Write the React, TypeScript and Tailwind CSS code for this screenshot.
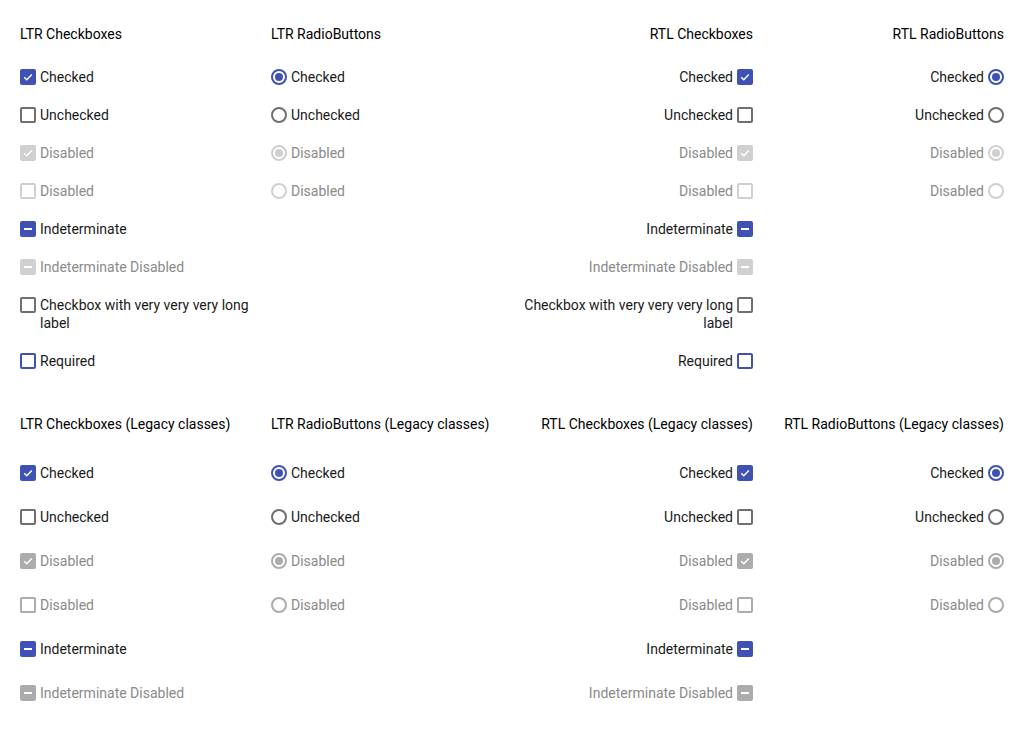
import React from "react";

type Kind = "checkbox" | "radio";
type State = "checked" | "unchecked" | "indeterminate";

interface Item {
  label: string;
  state: State;
  disabled?: boolean;
  required?: boolean;
}

const checkboxItems: Item[] = [
  { label: "Checked", state: "checked" },
  { label: "Unchecked", state: "unchecked" },
  { label: "Disabled", state: "checked", disabled: true },
  { label: "Disabled", state: "unchecked", disabled: true },
  { label: "Indeterminate", state: "indeterminate" },
  { label: "Indeterminate Disabled", state: "indeterminate", disabled: true },
  { label: "Checkbox with very very very long label", state: "unchecked" },
  { label: "Required", state: "unchecked", required: true },
];

const legacyCheckboxItems: Item[] = checkboxItems.slice(0, 6);

const radioItems: Item[] = [
  { label: "Checked", state: "checked" },
  { label: "Unchecked", state: "unchecked" },
  { label: "Disabled", state: "checked", disabled: true },
  { label: "Disabled", state: "unchecked", disabled: true },
];

function CheckBox({ item, legacy }: { item: Item; legacy: boolean }) {
  const dis = legacy ? "#acacac" : "#d0d0d0";
  if (item.state === "unchecked") {
    const border = item.disabled ? dis : item.required ? "#3f51b5" : "#6f6f6f";
    return (
      <span
        className="block w-4 h-4 shrink-0 rounded-[2px] border-2 bg-white"
        style={{ borderColor: border }}
      />
    );
  }
  const bg = item.disabled ? dis : "#3f51b5";
  return (
    <span
      className="flex items-center justify-center w-4 h-4 shrink-0 rounded-[2px]"
      style={{ backgroundColor: bg }}
    >
      {item.state === "checked" ? (
        <svg width="16" height="16" viewBox="0 0 16 16" fill="none">
          <path d="M4.2 8.2 L6.8 10.8 L11.8 5.6" stroke="white" strokeWidth="1.5" />
        </svg>
      ) : (
        <span className="block w-2 h-[2px] bg-white" />
      )}
    </span>
  );
}

function RadioDot({ item, legacy }: { item: Item; legacy: boolean }) {
  const dis = legacy ? "#acacac" : "#d0d0d0";
  const color = item.disabled ? dis : item.state === "checked" ? "#3f51b5" : "#6f6f6f";
  return (
    <span
      className="flex items-center justify-center w-4 h-4 shrink-0 rounded-full border-2 bg-white"
      style={{ borderColor: color }}
    >
      {item.state === "checked" && (
        <span className="block w-2 h-2 rounded-full" style={{ backgroundColor: color }} />
      )}
    </span>
  );
}

function Column({
  title,
  kind,
  items,
  rtl,
  legacy,
}: {
  title: string;
  kind: Kind;
  items: Item[];
  rtl: boolean;
  legacy: boolean;
}) {
  return (
    <div className={rtl ? "flex flex-col items-end" : "flex flex-col items-start"}>
      <h2 className={`leading-[18px] ${legacy ? "mb-[28px]" : "mb-[25px]"} ${rtl ? "text-right" : ""}`}>
        {title}
      </h2>
      <ul className="flex flex-col gap-5 w-full">
        {items.map((item, i) => (
          <li
            key={i}
            className={`flex gap-1 ${legacy ? "h-6 items-center" : "items-start"} ${
              rtl ? "flex-row-reverse text-right" : ""
            }`}
          >
            <span className={legacy ? "" : "mt-px"}>
              {kind === "checkbox" ? (
                <CheckBox item={item} legacy={legacy} />
              ) : (
                <RadioDot item={item} legacy={legacy} />
              )}
            </span>
            <span
              className={`leading-[18px] ${item.disabled ? "text-[#8a8a8a]" : "text-[#1a1a1a]"}`}
            >
              {item.label}
            </span>
          </li>
        ))}
      </ul>
    </div>
  );
}

export default function App() {
  return (
    <div
      className="w-[1024px] min-h-[742px] bg-white px-5 pt-[25px] text-sm"
      style={{ fontFamily: "Roboto, 'Liberation Sans', sans-serif" }}
    >
      <section className="grid grid-cols-4 gap-5">
        <Column title="LTR Checkboxes" kind="checkbox" items={checkboxItems} rtl={false} legacy={false} />
        <Column title="LTR RadioButtons" kind="radio" items={radioItems} rtl={false} legacy={false} />
        <Column title="RTL Checkboxes" kind="checkbox" items={checkboxItems} rtl legacy={false} />
        <Column title="RTL RadioButtons" kind="radio" items={radioItems} rtl legacy={false} />
      </section>
      <section className="grid grid-cols-4 gap-5 mt-[45px]">
        <Column title="LTR Checkboxes (Legacy classes)" kind="checkbox" items={legacyCheckboxItems} rtl={false} legacy />
        <Column title="LTR RadioButtons (Legacy classes)" kind="radio" items={radioItems} rtl={false} legacy />
        <Column title="RTL Checkboxes (Legacy classes)" kind="checkbox" items={legacyCheckboxItems} rtl legacy />
        <Column title="RTL RadioButtons (Legacy classes)" kind="radio" items={radioItems} rtl legacy />
      </section>
    </div>
  );
}
